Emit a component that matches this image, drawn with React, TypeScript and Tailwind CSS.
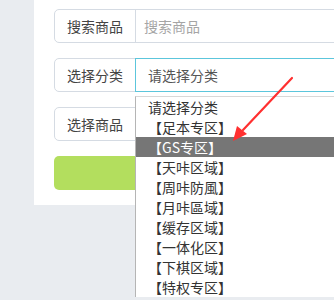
const options = [
  "请选择分类",
  "【足本专区】",
  "【GS专区】",
  "【天咔区域】",
  "【周咔防風】",
  "【月咔區域】",
  "【缓存区域】",
  "【一体化区】",
  "【下棋区域】",
  "【特权专区】",
];

function Group({ label, children, active }: { label: string; children: React.ReactNode; active?: boolean }) {
  return (
    <div className="flex h-[34px] w-[400px] text-[14px]">
      <div className="flex w-[82px] shrink-0 items-center rounded-l-[5px] border border-[#d5dbe3] bg-white pl-[12px] text-[#444]">
        {label}
      </div>
      <div
        className={
          active
            ? "-ml-px flex flex-1 items-center border border-[#5cc6dc] bg-white pl-[12px] text-[#555]"
            : "-ml-px flex flex-1 items-center border border-[#d5dbe3] bg-white pl-[8px] text-[#555]"
        }
      >
        {children}
      </div>
    </div>
  );
}

export default function App() {
  return (
    <div
      className="relative flex h-[300px] w-[334px] overflow-hidden bg-[#e9ecf0]"
      style={{ fontFamily: '"Noto Sans CJK SC", "Microsoft YaHei", sans-serif' }}
    >
      <div className="w-[34px] shrink-0 bg-[#e9ecf0]" />
      <div className="flex h-[205px] flex-1 flex-col gap-[15px] bg-white pl-[20px] pt-[9px]">
        <Group label="搜索商品">
          <span className="text-[#a5a5a5]">搜索商品</span>
        </Group>
        <Group label="选择分类" active>
          <span>请选择分类</span>
        </Group>
        <Group label="选择商品">
          <span />
        </Group>
        <div className="h-[34px] w-[400px] rounded-[5px] bg-[#b3de5e]" />
      </div>

      <ul className="absolute left-[135px] top-[96px] w-[260px] border-l border-t border-[#b5b5b5] border-t-[#d8d8d8] bg-white text-[14px] leading-[20px] text-[#333]">
        {options.map((o, i) => (
          <li key={o} className={i === 2 ? "bg-[#767676] pl-[12px] text-white" : "pl-[12px]"}>
            {o}
          </li>
        ))}
      </ul>

      <svg className="pointer-events-none absolute left-0 top-0" width="334" height="300" viewBox="0 0 334 300">
        <path d="M292 78 L243 130" stroke="#ff3030" strokeWidth="2.2" strokeLinecap="round" fill="none" />
        <polygon points="233,141 237,126 247,134" fill="#ff3030" />
      </svg>
    </div>
  );
}
